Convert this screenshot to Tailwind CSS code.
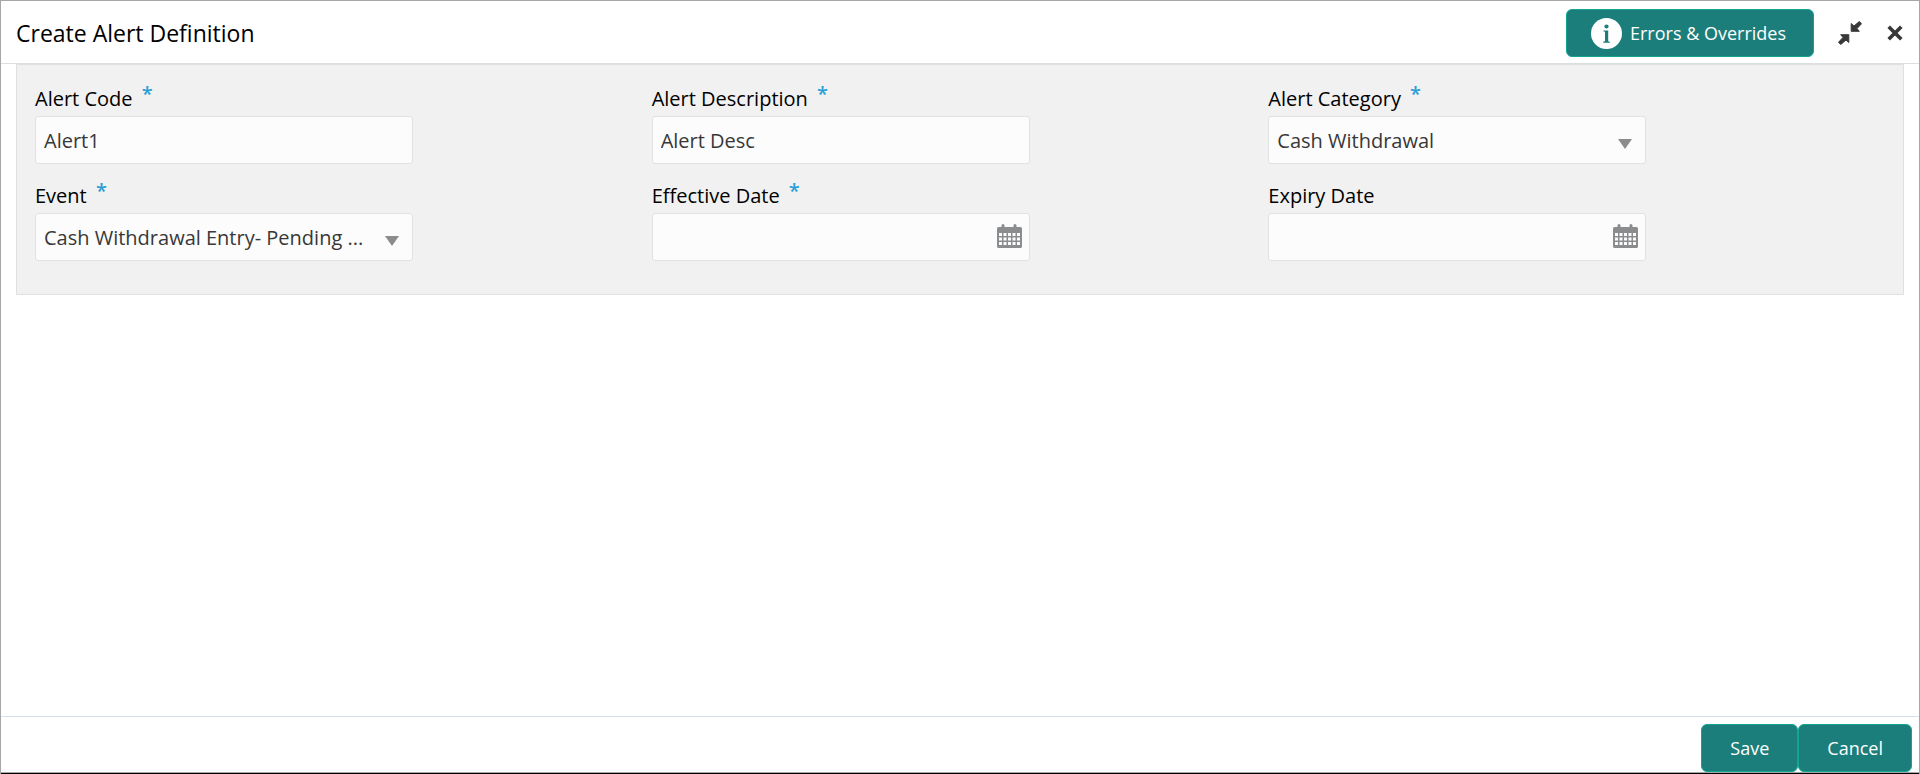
<!DOCTYPE html>
<html lang="en">
<head>
  <meta charset="UTF-8" />
  <meta name="viewport" content="width=device-width, initial-scale=1.0" />
  <title>Create Alert Definition</title>
  <script src="https://cdn.jsdelivr.net/npm/@tailwindcss/browser@4"></script>
</head>
<body class="min-h-screen flex flex-col bg-white text-black text-[20px] leading-8 font-['Open_Sans','Noto_Sans',sans-serif] border border-[#a6a6a6] border-b-0">
  <header class="flex items-center justify-between pl-[15px] pr-4 pt-2 pb-[6px] border-b border-[#dcdfdf]">
    <h1 class="text-[23px]">Create Alert Definition</h1>
    <div class="flex items-center">
      <button type="button" class="flex items-center gap-2 h-12 pl-6 pr-[27px] rounded-md border border-[#12a594] bg-[#1c7e7a] text-white text-[18px]">
        <svg class="size-[31px]" viewBox="0 0 31 31" aria-hidden="true">
          <circle cx="15.5" cy="15.5" r="15.5" fill="#fff" />
          <circle cx="15.5" cy="8.5" r="2.1" fill="#1c7e7a" />
          <path d="M12.5 12.5h4.700v10.700l1.600.5v1h-6.600v-1l1.800-.5v-9.400l-1.500-.4z" fill="#1c7e7a" />
        </svg>
        Errors &amp; Overrides
      </button>
      <button type="button" aria-label="Collapse" class="ml-6">
        <svg class="size-6" viewBox="0 0 24 24" fill="#383838" aria-hidden="true">
          <path d="M21.3 .5 23.500 2.700 19 7.600 21.300 10.300H13.200V2.500L16 5z" stroke="#383838" stroke-width="1" stroke-linejoin="round" />
          <path d="M2.700 23.500 .5 21.300 5 16.400 2.700 13.700H10.800V21.500L8 19z" stroke="#383838" stroke-width="1" stroke-linejoin="round" />
        </svg>
      </button>
      <button type="button" aria-label="Close" class="ml-[25px]">
        <svg class="size-4" viewBox="0 0 16 16" fill="none" stroke="#383838" stroke-width="3.6" aria-hidden="true">
          <path d="M1.700 1.700 14.300 14.300M14.300 1.700 1.700 14.300" />
        </svg>
      </button>
    </div>
  </header>

  <main class="flex-1 px-[15px]">
    <form id="alert-form" class="grid grid-cols-3 gap-y-[17px] px-[18px] pt-[19px] pb-[33px] bg-[#f1f1f1] border border-[#dfe1e1]">
      <div>
        <label for="code" class="block leading-[30px] pb-[2px]">Alert Code <span class="ml-1 text-[#2a9fd6] font-semibold leading-none align-[5px]">*</span></label>
        <input id="code" type="text" value="Alert1" class="block w-full max-w-[378px] h-12 px-2 rounded-[3px] border border-[#e0e2e2] bg-[#fcfcfc] text-[#383838]" />
      </div>
      <div>
        <label for="description" class="block leading-[30px] pb-[2px]">Alert Description <span class="ml-1 text-[#2a9fd6] font-semibold leading-none align-[5px]">*</span></label>
        <input id="description" type="text" value="Alert Desc" class="block w-full max-w-[378px] h-12 px-2 rounded-[3px] border border-[#e0e2e2] bg-[#fcfcfc] text-[#383838]" />
      </div>
      <div>
        <label for="category" class="block leading-[30px] pb-[2px]">Alert Category <span class="ml-1 text-[#2a9fd6] font-semibold leading-none align-[5px]">*</span></label>
        <div class="relative max-w-[378px]">
          <select id="category" class="block appearance-none w-full h-12 pl-2 pr-10 pt-[2px] rounded-[3px] border border-[#e0e2e2] bg-[#fcfcfc] text-[#383838] truncate">
            <option>Cash Withdrawal</option>
          </select>
          <svg class="absolute right-[14px] top-[23px] w-[14px] h-[10px] pointer-events-none" viewBox="0 0 14 10" fill="#8a8c8e" aria-hidden="true"><path d="M0 0H14L7 10z" /></svg>
        </div>
      </div>
      <div>
        <label for="event" class="block leading-[30px] pb-[2px]">Event <span class="ml-1 text-[#2a9fd6] font-semibold leading-none align-[5px]">*</span></label>
        <div class="relative max-w-[378px]">
          <select id="event" class="block appearance-none w-full h-12 pl-2 pr-10 pt-[2px] rounded-[3px] border border-[#e0e2e2] bg-[#fcfcfc] text-[#383838] truncate">
            <option>Cash Withdrawal Entry- Pending ...</option>
          </select>
          <svg class="absolute right-[14px] top-[23px] w-[14px] h-[10px] pointer-events-none" viewBox="0 0 14 10" fill="#8a8c8e" aria-hidden="true"><path d="M0 0H14L7 10z" /></svg>
        </div>
      </div>
      <div>
        <label for="effective" class="block leading-[30px] pb-[2px]">Effective Date <span class="ml-1 text-[#2a9fd6] font-semibold leading-none align-[5px]">*</span></label>
        <div class="relative max-w-[378px]">
          <input id="effective" type="text" class="block w-full h-12 pl-2 pr-10 rounded-[3px] border border-[#e0e2e2] bg-[#fcfcfc] text-[#383838]" />
          <button type="button" aria-label="Pick effective date" class="absolute right-2 top-[11px]">
            <svg class="block w-[25px] h-6" viewBox="0 0 25 24" aria-hidden="true">
              <path d="M1.500 3H4.500V1.500a1.500 1.500 0 0 1 3 0V3h9V1.500a1.500 1.500 0 0 1 3 0V3h4a1.500 1.500 0 0 1 1.500 1.500v18a1.500 1.500 0 0 1-1.500 1.500h-22A1.500 1.500 0 0 1 0 22.500v-18A1.500 1.500 0 0 1 1.500 3z" fill="#8a8c8e" />
              <path d="M2 10.500H23M2 15H23M2 19.500H23" stroke="#fcfcfc" stroke-width="3" stroke-dasharray="3 1.500" />
            </svg>
          </button>
        </div>
      </div>
      <div>
        <label for="expiry" class="block leading-[30px] pb-[2px]">Expiry Date</label>
        <div class="relative max-w-[378px]">
          <input id="expiry" type="text" class="block w-full h-12 pl-2 pr-10 rounded-[3px] border border-[#e0e2e2] bg-[#fcfcfc] text-[#383838]" />
          <button type="button" aria-label="Pick expiry date" class="absolute right-2 top-[11px]">
            <svg class="block w-[25px] h-6" viewBox="0 0 25 24" aria-hidden="true">
              <path d="M1.500 3H4.500V1.500a1.500 1.500 0 0 1 3 0V3h9V1.500a1.500 1.500 0 0 1 3 0V3h4a1.500 1.500 0 0 1 1.500 1.500v18a1.500 1.500 0 0 1-1.500 1.500h-22A1.500 1.500 0 0 1 0 22.500v-18A1.500 1.500 0 0 1 1.500 3z" fill="#8a8c8e" />
              <path d="M2 10.500H23M2 15H23M2 19.500H23" stroke="#fcfcfc" stroke-width="3" stroke-dasharray="3 1.500" />
            </svg>
          </button>
        </div>
      </div>
    </form>
  </main>

  <footer class="flex justify-end pt-[7px] pr-[7px] border-t border-[#d6dfe6]">
    <button type="submit" form="alert-form" class="h-12 px-7 rounded-md border border-[#12a594] bg-[#1c7e7a] text-white text-[18px]">Save</button>
    <button type="button" class="h-12 px-7 rounded-md border border-[#12a594] bg-[#1c7e7a] text-white text-[18px]">Cancel</button>
  </footer>
  <div class="h-[2px] border-t border-[#a6a6a6] bg-black"></div>
</body>
</html>
